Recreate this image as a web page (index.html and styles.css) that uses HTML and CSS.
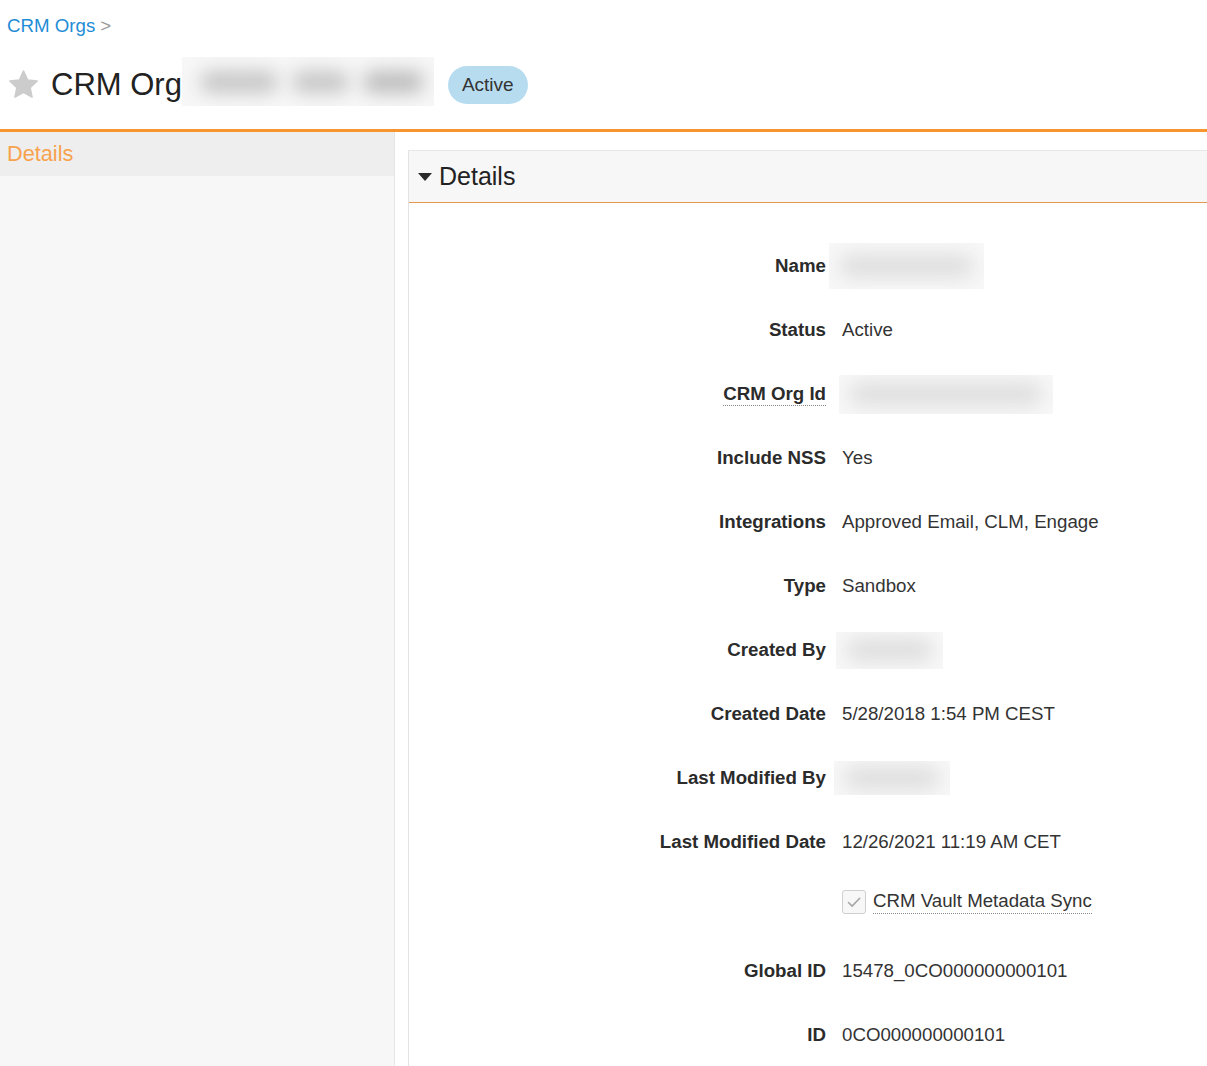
FILE: index.html
```html
<!DOCTYPE html>
<html lang="en">
<head>
<meta charset="utf-8">
<title>CRM Org</title>
<link rel="stylesheet" href="styles.css">
</head>
<body>
<header class="page-header">
  <nav class="breadcrumb"><a class="crumb-link" href="#">CRM Orgs</a><span class="crumb-sep">&gt;</span></nav>
  <div class="title-row">
    <svg class="star" viewBox="0 0 24 24" width="31" height="31" aria-hidden="true"><path d="M12 1.6l3.2 6.9 7.4.8-5.5 5.1 1.5 7.4L12 18.1l-6.6 3.7 1.5-7.4L1.4 9.3l7.4-.8z" fill="#cccccc" stroke="#cccccc" stroke-width="1.2" stroke-linejoin="round"/></svg>
    <h1 class="title">CRM Org</h1>
    <div class="redact-title"><span class="blob b1"></span><span class="blob b2"></span><span class="blob b3"></span></div>
    <span class="badge">Active</span>
  </div>
</header>
<div class="layout">
  <aside class="sidebar">
    <div class="side-item">Details</div>
  </aside>
  <main class="main">
    <section class="panel">
      <div class="panel-header"><span class="caret"></span><span class="panel-title">Details</span></div>
      <div class="fields">
        <div class="row"><div class="label">Name</div><div class="value"><span class="redact r-name"><span class="rblob"></span></span></div></div>
        <div class="row"><div class="label">Status</div><div class="value">Active</div></div>
        <div class="row"><div class="label"><span class="tip">CRM Org Id</span></div><div class="value"><span class="redact r-id"><span class="rblob"></span></span></div></div>
        <div class="row"><div class="label">Include NSS</div><div class="value">Yes</div></div>
        <div class="row"><div class="label">Integrations</div><div class="value">Approved Email, CLM, Engage</div></div>
        <div class="row"><div class="label">Type</div><div class="value">Sandbox</div></div>
        <div class="row"><div class="label">Created By</div><div class="value"><span class="redact r-cb"><span class="rblob"></span></span></div></div>
        <div class="row"><div class="label">Created Date</div><div class="value">5/28/2018 1:54 PM CEST</div></div>
        <div class="row"><div class="label">Last Modified By</div><div class="value"><span class="redact r-lmb"><span class="rblob"></span></span></div></div>
        <div class="row"><div class="label">Last Modified Date</div><div class="value">12/26/2021 11:19 AM CET</div></div>
        <div class="row row-check"><div class="label"></div><div class="value check-value"><span class="checkbox"><svg viewBox="0 0 24 24" width="24" height="24" aria-hidden="true"><path d="M6.5 12.5l3.6 3.6 7.6-7.8" fill="none" stroke="#a6a6a6" stroke-width="1.6" stroke-linecap="round" stroke-linejoin="round"/></svg></span><span class="tip check-label">CRM Vault Metadata Sync</span></div></div>
        <div class="row"><div class="label">Global ID</div><div class="value">15478_0CO000000000101</div></div>
        <div class="row"><div class="label">ID</div><div class="value">0CO000000000101</div></div>
      </div>
    </section>
  </main>
</div>
</body>
</html>
```
FILE: styles.css
```css
html, body {
  margin: 0;
  padding: 0;
  height: 100%;
  overflow: hidden;
}
body {
  font-family: "Liberation Sans", Arial, sans-serif;
  color: #333333;
  background: #ffffff;
}
.page-header {
  padding: 15px 0 21px 7px;
  border-bottom: 3px solid #f7962e;
}
.breadcrumb {
  font-size: 18.7px;
  line-height: 22px;
  height: 22px;
}
.crumb-link {
  color: #1f8dd6;
  text-decoration: none;
}
.crumb-sep {
  color: #999999;
  margin-left: 5px;
}
.title-row {
  display: flex;
  align-items: center;
  height: 50px;
  margin-top: 21px;
}
.star {
  display: block;
  margin-left: 1px;
  margin-top: 2px;
}
.title {
  margin: 0 0 0 12px;
  font-size: 31px;
  font-weight: normal;
  line-height: 40px;
  color: #222222;
  margin-top: 3px;
}
.redact-title {
  width: 252px;
  height: 49px;
  background: #f7f7f7;
  display: flex;
  align-items: center;
  gap: 14px;
  padding: 0 10px 0 18px;
  box-sizing: border-box;
  overflow: hidden;
  align-self: flex-start;
  margin-top: -1px;
}
.blob {
  height: 22px;
  background: #c6c6c6;
  border-radius: 11px;
  filter: blur(9px);
}
.b1 { width: 82px; }
.b2 { width: 60px; }
.b3 { width: 64px; background: #bcbcbc; }
.badge {
  margin-left: 14px;
  background: #b7dcf0;
  border-radius: 19px;
  height: 38px;
  line-height: 38px;
  padding: 0 14px;
  font-size: 19px;
  color: #333333;
  margin-top: 4px;
}
.layout {
  display: flex;
  height: calc(100vh - 132px);
}
.sidebar {
  width: 394px;
  flex: none;
  background: #f7f7f7;
  border-right: 1px solid #e6e6e6;
}
.side-item {
  height: 44px;
  line-height: 44px;
  background: #eeeeee;
  padding-left: 7px;
  font-size: 21.7px;
  color: #f7a24d;
}
.main {
  flex: 1;
  padding: 18px 0 0 13px;
  min-width: 0;
}
.panel {
  border-left: 1px solid #e3e3e3;
  border-top: 1px solid #e8e8e8;
  height: 100%;
  box-sizing: border-box;
}
.panel-header {
  height: 51px;
  background: #f7f7f7;
  border-bottom: 1px solid #e39a4f;
  display: flex;
  align-items: center;
  padding-left: 9px;
}
.caret {
  width: 0;
  height: 0;
  border-left: 7px solid transparent;
  border-right: 7px solid transparent;
  border-top: 8px solid #2b2b2b;
  margin-right: 7px;
  margin-top: 1px;
}
.panel-title {
  font-size: 25px;
  color: #222222;
}
.fields {
  padding-top: 31px;
}
.row {
  display: grid;
  grid-template-columns: 417px 1fr;
  column-gap: 16px;
  height: 64px;
  align-items: center;
  font-size: 18.7px;
}
.label {
  text-align: right;
  font-weight: bold;
  color: #2b2b2b;
}
.value {
  color: #333333;
  display: flex;
  align-items: center;
}
.tip {
  border-bottom: 1px dotted #8a8a8a;
  padding-bottom: 1px;
}
.redact {
  display: flex;
  align-items: center;
  background: #f8f8f8;
  overflow: hidden;
  box-sizing: border-box;
  padding: 0 10px;
}
.rblob {
  display: block;
  flex: 1;
  height: 22px;
  background: #dcdcdc;
  border-radius: 11px;
  filter: blur(10px);
}
.r-name { width: 155px; height: 46px; margin-left: -13px; }
.r-id { width: 214px; height: 39px; margin-left: -3px; }
.r-cb { width: 107px; height: 37px; margin-left: -6px; }
.r-lmb { width: 116px; height: 34px; margin-left: -8px; }
.row-check {
  height: 65px;
  align-items: start;
  padding-top: 16px;
  box-sizing: border-box;
}
.check-value {
  gap: 7px;
}
.checkbox {
  width: 22px;
  height: 22px;
  border: 1px solid #cfcfcf;
  border-radius: 3px;
  background: #f7f7f7;
  display: flex;
  align-items: center;
  justify-content: center;
  overflow: hidden;
}
.checkbox svg {
  display: block;
  flex: none;
}
.check-label {
  color: #333333;
}
```
